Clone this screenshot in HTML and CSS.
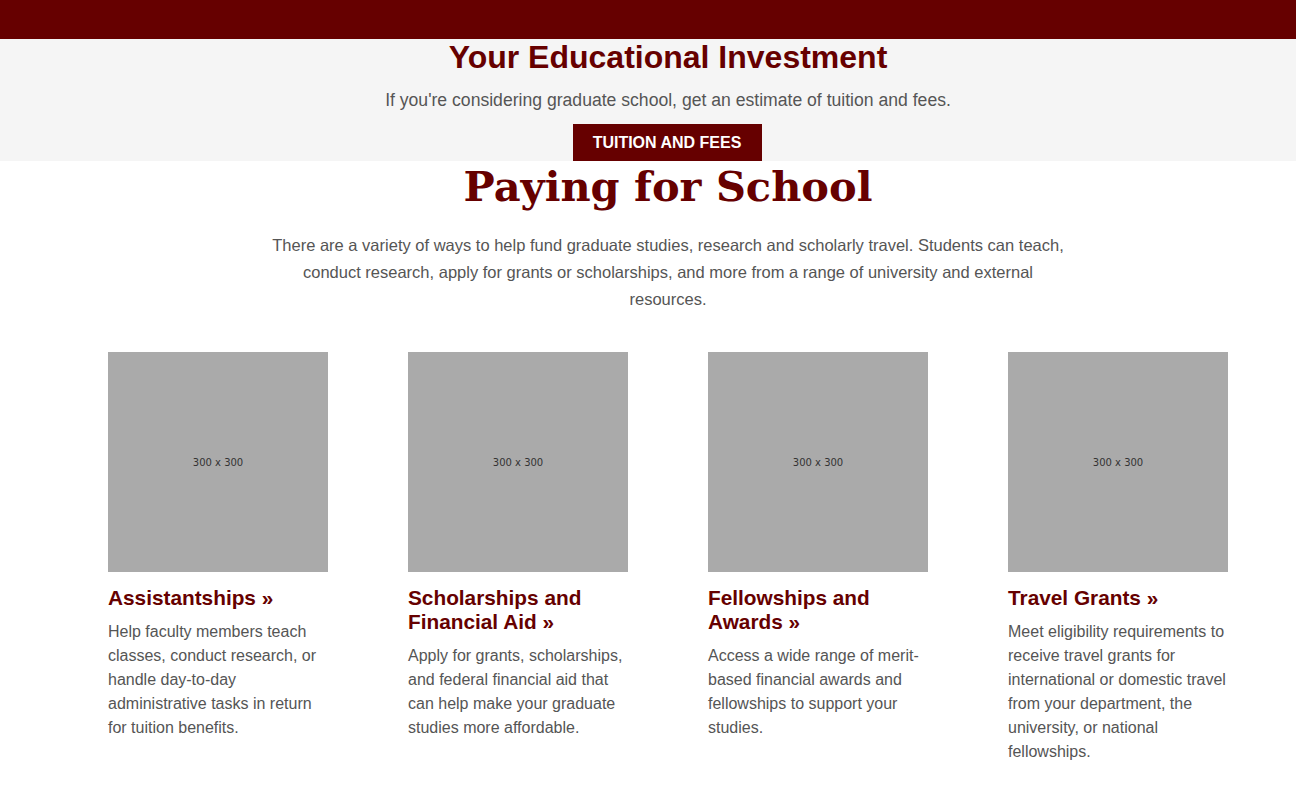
FILE: index.html
```html
<!DOCTYPE html>
<html lang="en">
<head>
<meta charset="utf-8">
<title>Paying for School</title>
<link rel="stylesheet" href="styles.css">
</head>
<body>
<div class="topbar"></div>
<section class="invest">
  <div class="inner">
    <h2 class="invest-title">Your Educational Investment</h2>
    <p class="invest-text">If you're considering graduate school, get an estimate of tuition and fees.</p>
    <a class="btn" href="#">TUITION AND FEES</a>
  </div>
</section>
<section class="paying">
  <div class="inner">
    <h1 class="paying-title">Paying for School</h1>
    <p class="paying-text">There are a variety of ways to help fund graduate studies, research and scholarly travel. Students can teach, conduct research, apply for grants or scholarships, and more from a range of university and external resources.</p>
    <div class="cards">
      <div class="card">
        <div class="ph">300 x 300</div>
        <h3 class="card-title">Assistantships »</h3>
        <p class="card-text">Help faculty members teach classes, conduct research, or handle day-to-day administrative tasks in return for tuition benefits.</p>
      </div>
      <div class="card">
        <div class="ph">300 x 300</div>
        <h3 class="card-title">Scholarships and Financial Aid »</h3>
        <p class="card-text">Apply for grants, scholarships, and federal financial aid that can help make your graduate studies more affordable.</p>
      </div>
      <div class="card">
        <div class="ph">300 x 300</div>
        <h3 class="card-title">Fellowships and Awards »</h3>
        <p class="card-text">Access a wide range of merit-based financial awards and fellowships to support your studies.</p>
      </div>
      <div class="card">
        <div class="ph">300 x 300</div>
        <h3 class="card-title">Travel Grants »</h3>
        <p class="card-text">Meet eligibility requirements to receive travel grants for international or domestic travel from your department, the university, or national fellowships.</p>
      </div>
    </div>
  </div>
</section>
</body>
</html>
```
FILE: styles.css
```css
* { box-sizing: border-box; }
html, body { margin: 0; padding: 0; background: #fff; }
body { font-family: "Liberation Sans", Arial, sans-serif; color: #555; }
.topbar { height: 39px; background: #660000; }
.invest { background: #f5f5f5; }
.inner { padding-left: 40px; display: flex; flex-direction: column; align-items: center; }
.invest-title { margin: 0; padding-top: 1px; font-size: 32px; line-height: 34px; font-weight: bold; color: #660000; }
.invest-text { margin: 15px 0 0; font-size: 17.6px; line-height: 22px; color: #555; }
.btn { display: block; margin-top: 13px; margin-right: 2px; width: 189px; height: 37px; line-height: 37px; text-align: center; background: #660000; color: #fff; font-weight: bold; font-size: 16px; text-decoration: none; }
.paying-title { margin: 0; font-family: "DejaVu Serif", Georgia, serif; font-weight: bold; font-size: 41.5px; line-height: 52px; color: #660000; }
.paying-text { margin: 19px 0 0; width: 800px; text-align: center; font-size: 16.5px; line-height: 27px; color: #555; }
.cards { display: flex; gap: 80px; margin-top: 39px; }
.card { width: 220px; }
.ph { width: 220px; height: 220px; background: #aaa; display: flex; align-items: center; justify-content: center; font-family: "DejaVu Sans", sans-serif; font-size: 10px; color: #333; }
.card-title { margin: 14px 0 0; font-size: 20.8px; line-height: 24px; font-weight: bold; color: #660000; }
.card-text { margin: 10px 0 0; font-size: 16px; line-height: 24px; color: #555; }
```
